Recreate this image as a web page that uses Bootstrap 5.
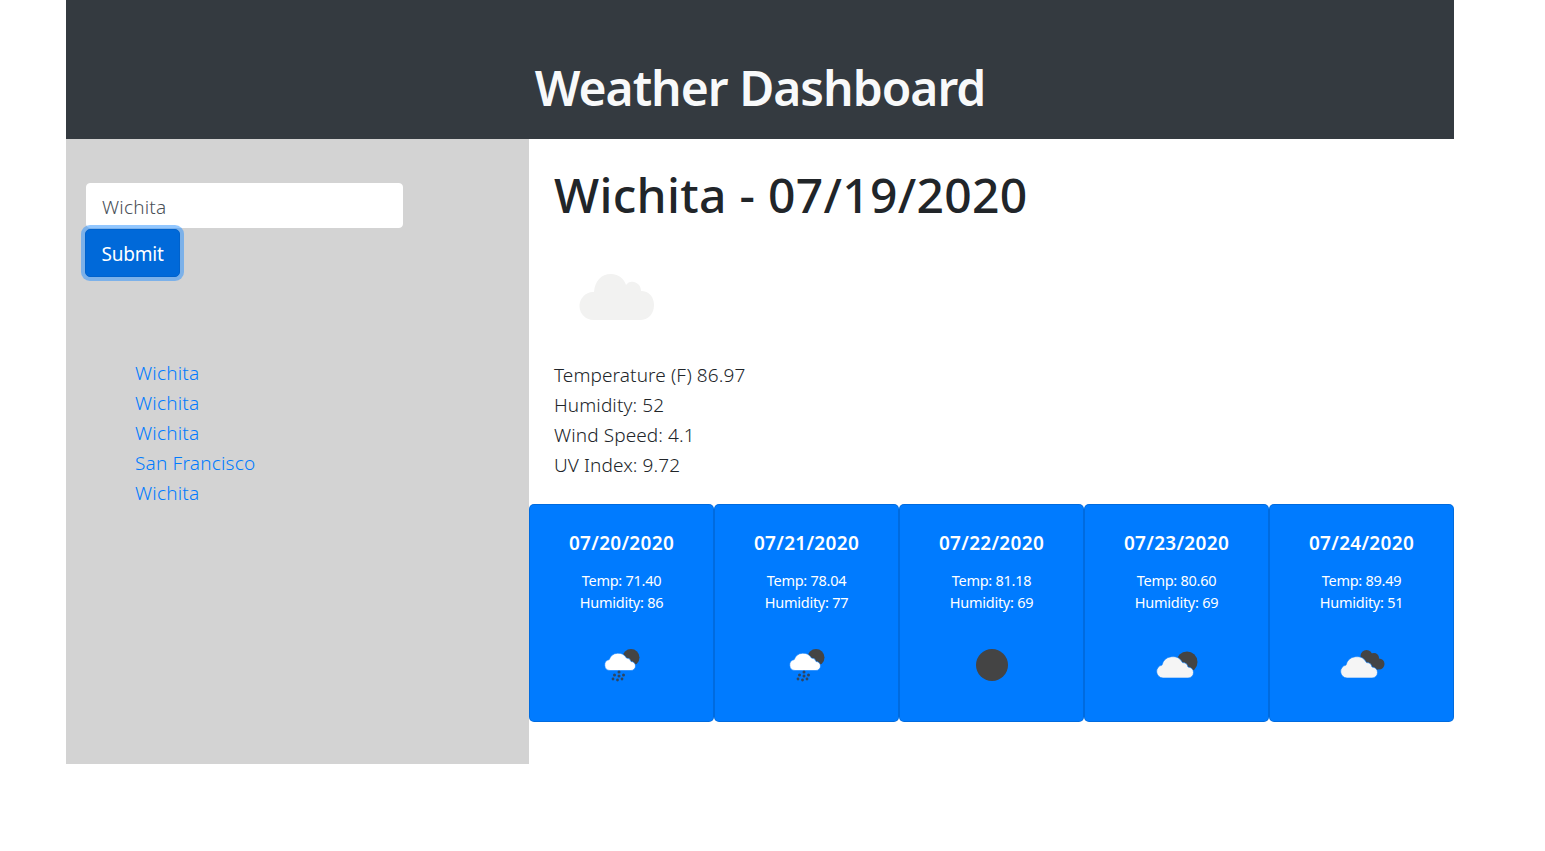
<!DOCTYPE html><html lang="en">
<head>
  <meta charset="UTF-8">
  <meta name="viewport" content="width=device-width, initial-scale=1.0">
  <title>Weather Dashboard</title>
  <link rel="stylesheet" href="https://cdn.jsdelivr.net/npm/bootstrap@5.3.0/dist/css/bootstrap.min.css">
  <style>
    body {
      background-color: #fff;
      color: #212529;
      font-family: "Noto Sans", "Open Sans", sans-serif;
    }
    .page-wrap {
      width: 1388px;
      margin-left: 66px;
    }
    .top-bar {
      height: 139px;
      background-color: #343a40;
      padding-top: 59px;
    }
    .top-bar h1 {
      font-size: 48px;
      line-height: 57px;
      font-weight: 600;
      letter-spacing: -1px;
      color: #f8f9fa;
      margin: 0;
    }
    .side-col {
      width: 463px;
      height: 625px;
      background-color: #d3d3d3;
      padding: 44px 0 0 19px;
      flex: none;
    }
    .city-input {
      display: block;
      width: 317px;
      height: 45px;
      margin-left: 1px;
      padding: 8px 15px 6px;
      font-size: 19px;
      font-weight: 300;
      line-height: 30px;
      color: #495057;
      background: #fff;
      border: 1px solid #fff;
      border-radius: 4px;
      letter-spacing: 0.2px;
    }
    .go-btn {
      display: block;
      width: 95px;
      height: 48px;
      margin-top: 1px;
      font-size: 19px;
      padding: 2px 0 0;
      color: #fff;
      background-color: #0069d9;
      border: 1px solid #0062cc;
      border-radius: 5px;
      box-shadow: 0 0 0 4px rgba(38, 143, 255, .5);
      letter-spacing: -0.2px;
    }
    .city-links {
      list-style: none;
      margin: 81px 0 0 50px;
      padding: 0;
      font-size: 19px;
      font-weight: 300;
      line-height: 30px;
      letter-spacing: 0.2px;
    }
    .city-links a {
      color: #007bff;
      text-decoration: none;
    }
    .main-col {
      width: 925px;
      flex: none;
    }
    .today-box {
      height: 365px;
      padding: 24px 0 0 25px;
    }
    .today-box h2 {
      font-size: 48px;
      line-height: 64px;
      font-weight: 500;
      letter-spacing: 0.3px;
      margin: 0;
    }
    .today-icon {
      display: block;
      margin: 46px 0 0 25px;
    }
    .today-stats {
      margin-top: 39px;
      font-size: 19px;
      font-weight: 300;
      line-height: 30px;
      letter-spacing: 0.1px;
    }
    .day-card {
      width: 185px;
      height: 218px;
      flex: none;
      color: #fff;
      background-color: #007bff;
      border: 1px solid rgba(0, 0, 0, .125);
      border-radius: 5px;
      text-align: center;
      padding-top: 24px;
    }
    .day-card h5 {
      font-size: 19px;
      line-height: 28px;
      font-weight: 600;
      letter-spacing: 0.3px;
      margin: 0 0 12px;
    }
    .day-card p {
      font-size: 14.5px;
      line-height: 22px;
      letter-spacing: -0.25px;
      margin: 0;
    }
    .day-icon {
      display: block;
      margin: 35px auto 0;
    }
  </style>
</head>
<body>
  <div class="page-wrap">
    <div class="top-bar text-center">
      <h1>Weather Dashboard</h1>
    </div>
    <div class="d-flex">
      <div class="side-col">
        <form>
          <input type="text" class="city-input" value="Wichita">
          <button type="button" class="go-btn">Submit</button>
        </form>
        <ul class="city-links">
          <li><a href="#">Wichita</a></li>
          <li><a href="#">Wichita</a></li>
          <li><a href="#">Wichita</a></li>
          <li><a href="#">San Francisco</a></li>
          <li><a href="#">Wichita</a></li>
        </ul>
      </div>
      <div class="main-col">
        <div class="today-box">
          <h2>Wichita - 07/19/2020</h2>
          <svg class="today-icon" width="76" height="48" viewBox="0 0 76 48">
            <path fill="#f2f2f1" d="M15 47a14 14 0 0 1-1-28h1C16 8 22 1 32 1c8 0 13 5 15 11 2-3 5-4 8-3 4 1 7 4 7 9 8 0 13 6 13 14 0 9-6 15-14 15z"/>
          </svg>
          <div class="today-stats">
            <div>Temperature (F) 86.97</div>
            <div>Humidity: 52</div>
            <div>Wind Speed: 4.1</div>
            <div>UV Index: 9.72</div>
          </div>
        </div>
        <div class="d-flex">
          <div class="day-card">
            <h5>07/20/2020</h5>
            <p>Temp: 71.40</p>
            <p>Humidity: 86</p>
            <svg class="day-icon" width="36" height="34" viewBox="0 0 36 34">
              <circle cx="27" cy="9.500" r="8.500" fill="#444"/>
              <path fill="#fff" stroke="#007bff" stroke-width="0.6" d="M6 22.500a5.500 5.500 0 0 1-.8-10.900a9.500 9.500 0 0 1 17.300-1.500a4.500 4.500 0 0 1 4.500 3.400a4.500 4.500 0 0 1 0 9z"/>
              <g fill="#2f4560"><circle cx="15" cy="24" r="1.500"/><circle cx="10.500" cy="27" r="1.500"/><circle cx="15" cy="28" r="1.500"/><circle cx="19.500" cy="27" r="1.500"/><circle cx="9" cy="31" r="1.400"/><circle cx="13.500" cy="32" r="1.400"/><circle cx="18" cy="31" r="1.400"/></g>
            </svg>
          </div>
          <div class="day-card">
            <h5>07/21/2020</h5>
            <p>Temp: 78.04</p>
            <p>Humidity: 77</p>
            <svg class="day-icon" width="36" height="34" viewBox="0 0 36 34">
              <circle cx="27" cy="9.500" r="8.500" fill="#444"/>
              <path fill="#fff" stroke="#007bff" stroke-width="0.6" d="M6 22.500a5.500 5.500 0 0 1-.8-10.900a9.500 9.500 0 0 1 17.300-1.500a4.500 4.500 0 0 1 4.500 3.400a4.500 4.500 0 0 1 0 9z"/>
              <g fill="#2f4560"><circle cx="15" cy="24" r="1.500"/><circle cx="10.500" cy="27" r="1.500"/><circle cx="15" cy="28" r="1.500"/><circle cx="19.500" cy="27" r="1.500"/><circle cx="9" cy="31" r="1.400"/><circle cx="13.500" cy="32" r="1.400"/><circle cx="18" cy="31" r="1.400"/></g>
            </svg>
          </div>
          <div class="day-card">
            <h5>07/22/2020</h5>
            <p>Temp: 81.18</p>
            <p>Humidity: 69</p>
            <svg class="day-icon" width="36" height="34" viewBox="0 0 36 34">
              <circle cx="18" cy="17" r="16" fill="#444"/>
            </svg>
          </div>
          <div class="day-card">
            <h5>07/23/2020</h5>
            <p>Temp: 80.60</p>
            <p>Humidity: 69</p>
            <svg class="day-icon" width="44" height="34" viewBox="0 0 44 34">
              <circle cx="32" cy="14" r="10.500" fill="#444"/>
              <path fill="#f5f5f5" stroke="#007bff" stroke-width="0.6" d="M8 30a6.500 6.500 0 0 1-1-12.900a11 11 0 0 1 20.500-2.500a5.500 5.500 0 0 1 5.500 4.400a5.500 5.500 0 0 1 0 11z"/>
            </svg>
          </div>
          <div class="day-card">
            <h5>07/24/2020</h5>
            <p>Temp: 89.49</p>
            <p>Humidity: 51</p>
            <svg class="day-icon" width="46" height="34" viewBox="0 0 46 34">
              <g fill="#444"><circle cx="27.500" cy="8" r="6"/><circle cx="35" cy="10" r="5"/><circle cx="40" cy="16" r="5.500"/><path d="M26 8h10l8 8-6 6H28z"/></g>
              <path fill="#f5f5f5" stroke="#007bff" stroke-width="0.6" d="M8 30a6.500 6.500 0 0 1-1-12.900a11 11 0 0 1 20.500-2.500a5.500 5.500 0 0 1 5.500 4.400a5.500 5.500 0 0 1 0 11z"/>
            </svg>
          </div>
        </div>
      </div>
    </div>
  </div>
  <script src="https://cdn.jsdelivr.net/npm/bootstrap@5.3.0/dist/js/bootstrap.bundle.min.js"></script>
</body>
</html>
